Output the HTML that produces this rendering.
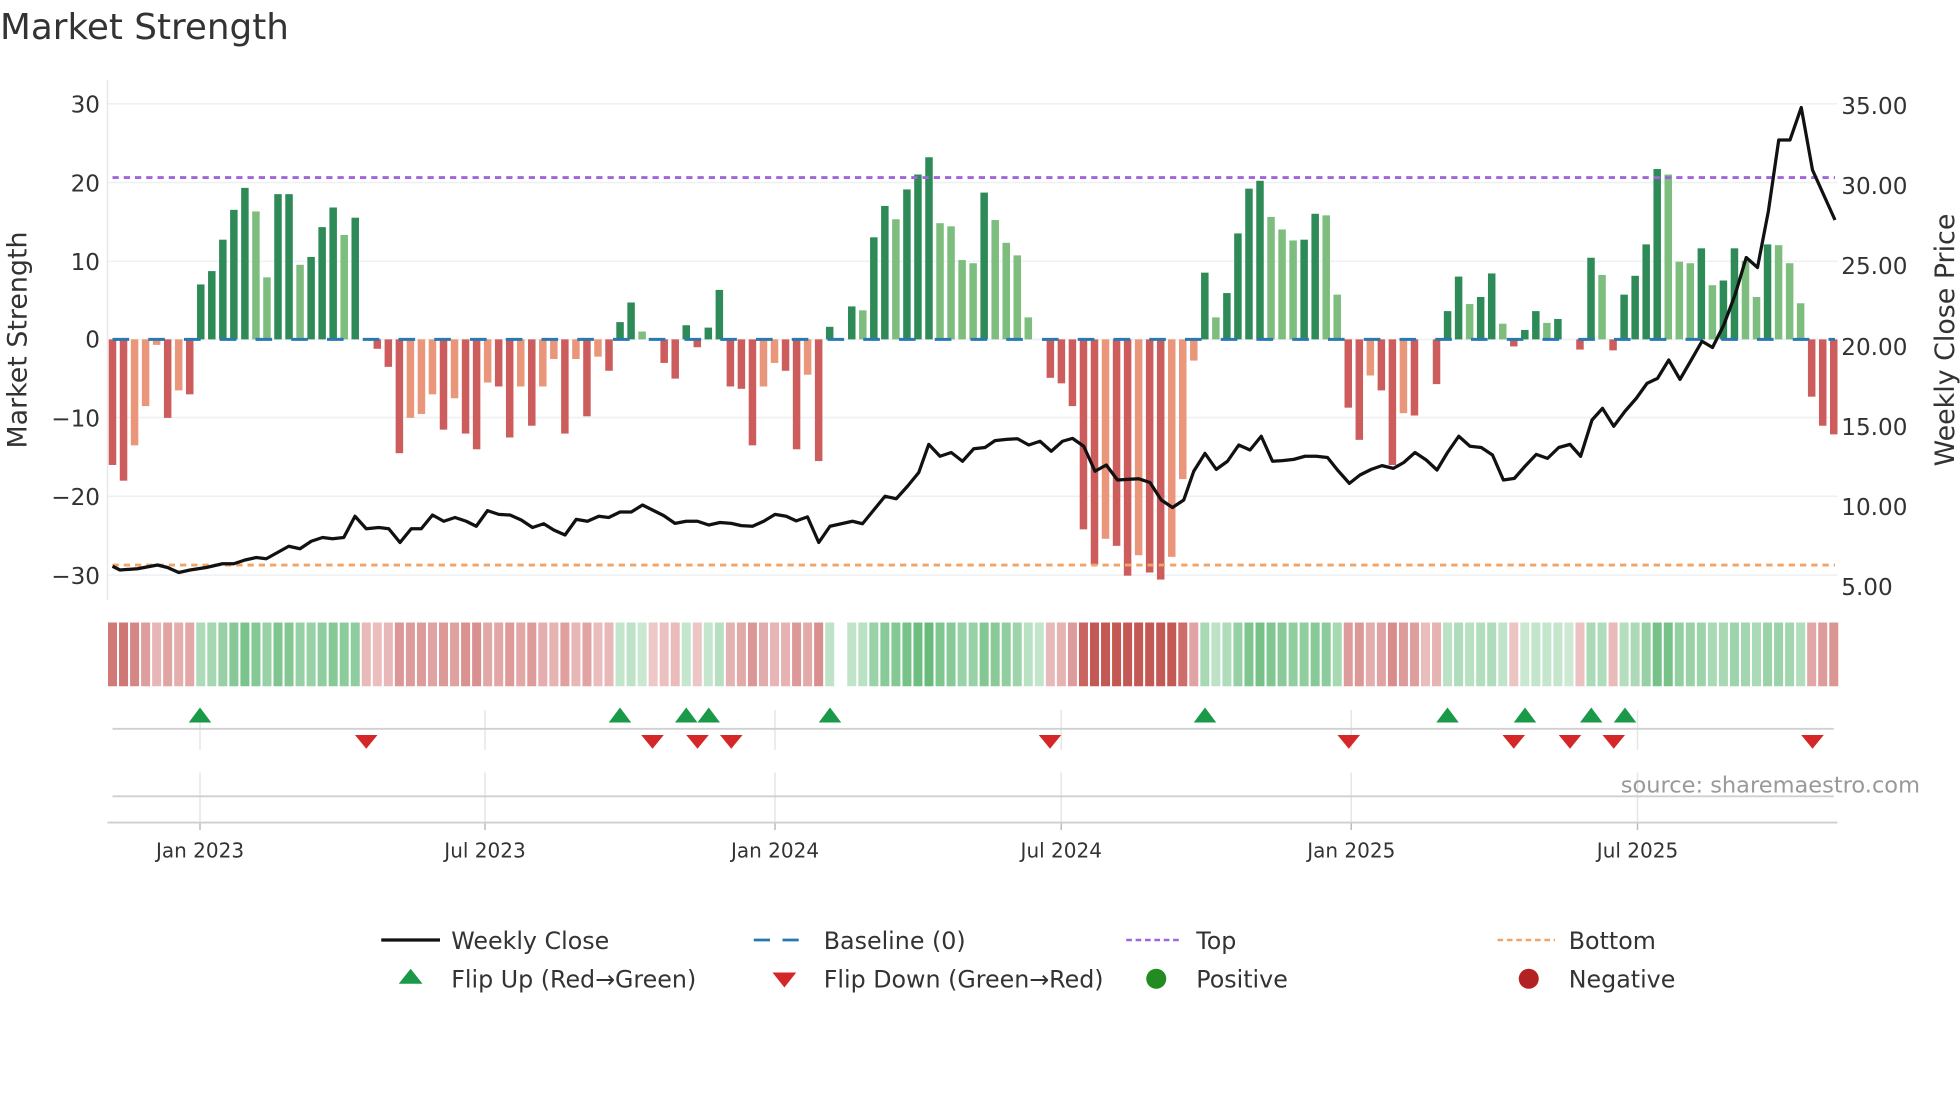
<!DOCTYPE html>
<html><head><meta charset="utf-8">
<style>
html,body{margin:0;padding:0;background:#fff;}
svg{display:block;}
text{font-family:"DejaVu Sans","Liberation Sans",sans-serif;fill:#333;}
</style></head>
<body>
<svg id="s" xmlns="http://www.w3.org/2000/svg" width="1960" height="1102" viewBox="0 0 1568 881.6">
<rect width="1568" height="882" fill="#fff"/>
<text x="0" y="31" font-size="28.6">Market Strength</text>
<g id="grid"></g>
<line x1="86" y1="64" x2="86" y2="480" stroke="#e6e8ec" stroke-width="1.2"/>
<g id="bars"></g>
<line x1="90" y1="142" x2="1468" y2="142" stroke="#a064dc" stroke-width="2.3" stroke-dasharray="5 4"/>
<line x1="90" y1="452" x2="1468" y2="452" stroke="#f2a366" stroke-width="2.3" stroke-dasharray="5 4"/>
<line x1="90" y1="271.5" x2="1468" y2="271.5" stroke="#2a78b0" stroke-width="2.4" stroke-dasharray="13.3 15.3"/>
<polyline id="price" fill="none" stroke="#111" stroke-width="2.6" stroke-linejoin="round"/>
<g font-size="18.5" text-anchor="end">
<text x="80" y="90">30</text><text x="80" y="153">20</text><text x="80" y="216">10</text>
<text x="80" y="278">0</text><text x="80" y="341">−10</text><text x="80" y="404">−20</text><text x="80" y="467">−30</text>
</g>
<g font-size="18.5">
<text x="1473" y="91">35.00</text><text x="1473" y="155">30.00</text><text x="1473" y="219">25.00</text>
<text x="1473" y="284">20.00</text><text x="1473" y="348">15.00</text><text x="1473" y="412">10.00</text><text x="1473" y="476">5.00</text>
</g>
<text transform="translate(21,272) rotate(-90)" text-anchor="middle" font-size="21.5">Market Strength</text>
<text transform="translate(1563,272) rotate(-90)" text-anchor="middle" font-size="21.5">Weekly Close Price</text>
<g id="heat"></g>
<g id="vgrid"></g>
<line x1="90" y1="583" x2="1467" y2="583" stroke="#d0d0d0" stroke-width="1.5"/>
<line x1="90" y1="637" x2="1467" y2="637" stroke="#d0d0d0" stroke-width="1.5"/>
<line x1="86" y1="658" x2="1470" y2="658" stroke="#cfcfcf" stroke-width="1.5"/>
<g id="marks"></g>
<text x="1536" y="634" font-size="18" text-anchor="end" style="fill:#999">source: sharemaestro.com</text>
<g font-size="16" text-anchor="middle">
<text x="160" y="686">Jan 2023</text><text x="388" y="686">Jul 2023</text><text x="620" y="686">Jan 2024</text>
<text x="849" y="686">Jul 2024</text><text x="1081" y="686">Jan 2025</text><text x="1310" y="686">Jul 2025</text>
</g>
<g font-size="19">
<line x1="305" y1="752" x2="352" y2="752" stroke="#111" stroke-width="2.6"/>
<text x="361" y="759">Weekly Close</text>
<line x1="603" y1="752" x2="648" y2="752" stroke="#2a78b0" stroke-width="2.2" stroke-dasharray="13 10"/>
<text x="659" y="759">Baseline (0)</text>
<line x1="901" y1="752" x2="946" y2="752" stroke="#a064dc" stroke-width="2" stroke-dasharray="4.5 3"/>
<text x="957" y="759">Top</text>
<line x1="1198" y1="752" x2="1244" y2="752" stroke="#f2a366" stroke-width="2" stroke-dasharray="4.5 3"/>
<text x="1255" y="759">Bottom</text>
<polygon points="319,787 338,787 328.5,775" fill="#1a9a48"/>
<text x="361" y="790">Flip Up (Red→Green)</text>
<polygon points="618,778 637,778 627.5,790" fill="#d62728"/>
<text x="659" y="790">Flip Down (Green→Red)</text>
<circle cx="925" cy="783" r="8" fill="#228b22"/>
<text x="957" y="790">Positive</text>
<circle cx="1223" cy="783" r="8" fill="#b22222"/>
<text x="1255" y="790">Negative</text>
</g>
</svg>
<script>
var NS="http://www.w3.org/2000/svg";
function el(p,t,a){var e=document.createElementNS(NS,t);for(var k in a)e.setAttribute(k,a[k]);document.getElementById(p).appendChild(e);return e;}
[83,146,209,271.5,334,397,460].forEach(function(y){el("grid","line",{x1:86,x2:1470,y1:y,y2:y,stroke:"#eef0f4","stroke-width":1.3});});
var d=[[-16,2],[-18,2],[-13.5,3],[-8.5,3],[-0.7,3],[-10,2],[-6.5,3],[-7,2],[7,0],[8.7,0],[12.7,0],[16.5,0],[19.3,0],[16.3,1],[7.9,1],[18.5,0],[18.5,0],[9.5,1],[10.5,0],[14.3,0],[16.8,0],[13.3,1],[15.5,0],[-0.3,0],[-1.2,2],[-3.5,2],[-14.5,2],[-10,3],[-9.5,3],[-7,3],[-11.5,2],[-7.5,3],[-12,2],[-14,2],[-5.5,3],[-6,2],[-12.5,2],[-6,3],[-11,2],[-6,3],[-2.5,3],[-12,2],[-2.5,3],[-9.8,2],[-2.2,3],[-4,2],[2.2,0],[4.7,0],[1,1],[-0.3,0],[-3,2],[-5,2],[1.8,0],[-1,2],[1.5,0],[6.3,0],[-6,2],[-6.3,2],[-13.5,2],[-6,3],[-3,3],[-4,2],[-14,2],[-4.5,3],[-15.5,2],[1.6,0],[0,0],[4.2,0],[3.7,1],[13,0],[17,0],[15.3,1],[19.1,0],[21,0],[23.2,0],[14.8,1],[14.4,1],[10.1,1],[9.7,1],[18.7,0],[15.2,1],[12.3,1],[10.7,1],[2.8,1],[0.3,1],[-4.9,2],[-5.6,2],[-8.5,2],[-24.2,2],[-28.7,2],[-25.4,3],[-26.3,2],[-30.1,2],[-27.5,3],[-29.7,2],[-30.6,2],[-27.7,3],[-17.8,3],[-2.7,3],[8.5,0],[2.8,1],[5.9,0],[13.5,0],[19.2,0],[20.2,0],[15.6,1],[14,1],[12.6,1],[12.7,0],[16,0],[15.8,1],[5.7,1],[-8.7,2],[-12.8,2],[-4.6,3],[-6.5,2],[-16,2],[-9.4,3],[-9.7,2],[-0.3,0],[-5.7,2],[3.6,0],[8,0],[4.5,1],[5.4,0],[8.4,0],[2,1],[-0.9,2],[1.2,0],[3.6,0],[2.1,1],[2.6,0],[0.3,0],[-1.3,2],[10.4,0],[8.2,1],[-1.4,2],[5.7,0],[8.1,0],[12.1,0],[21.7,0],[21,1],[9.9,1],[9.7,1],[11.6,0],[6.9,1],[7.5,0],[11.6,0],[10,1],[5.4,1],[12.1,0],[12,1],[9.7,1],[4.6,1],[-7.3,2],[-11,2],[-12.1,2]];
var cols=["#2e8b57","#7dbd7d","#cd5c5c","#e9967a"];
var step=1377/156, z=271.5, u=6.28;
d.forEach(function(b,i){
  var x=90+i*step, v=b[0];
  if(Math.abs(v)>=0.35){var h=Math.abs(v)*u; el("bars","rect",{x:x-3,y:v>0?z-h:z,width:6,height:h,fill:cols[b[1]]});}
  var s=0,n=0;for(var j=Math.max(0,i-2);j<=Math.min(d.length-1,i+1);j++){s+=Math.abs(d[j][0]);n++;}
  var m=0.5*Math.abs(v)+0.5*s/n, a=Math.min(1,0.12+m/26);
  var c;
  if(v===0) c="#ffffff";
  else if(v>0){c="rgb("+Math.round(222-(222-98)*a)+","+Math.round(242-(242-184)*a)+","+Math.round(228-(228-118)*a)+")";}
  else {c="rgb("+Math.round(246-(246-196)*a)+","+Math.round(222-(222-88)*a)+","+Math.round(224-(224-84)*a)+")";}
  el("heat","rect",{x:x-3.6,y:498,width:7.2,height:51,fill:c});
});
[160,388,620,849,1081,1310].forEach(function(x){
  el("vgrid","line",{x1:x,x2:x,y1:568,y2:600,stroke:"#e6e6e6","stroke-width":1.2});
  el("vgrid","line",{x1:x,x2:x,y1:618,y2:658,stroke:"#e6e6e6","stroke-width":1.2});
  el("vgrid","line",{x1:x,x2:x,y1:658,y2:664,stroke:"#bbb","stroke-width":1.2});
});
[160,496,549,567,664,964,1158,1220,1273,1300].forEach(function(x){
  el("marks","polygon",{points:(x-9)+",578 "+(x+9)+",578 "+x+",566",fill:"#1a9a48"});});
[293,522,558,585,840,1079,1211,1256,1291,1450].forEach(function(x){
  el("marks","polygon",{points:(x-9)+",588 "+(x+9)+",588 "+x+",599",fill:"#d62728"});});
var p=[[90,453],[96,456],[110,455],[126,452],[134,454],[143,458],[152,456],[165,454],[178,451],[187,451],[196,448],[205,446],[213,447],[222,442],[231,437],[240,439],[249,433],[258,430],[266,431],[275,430],[284,413],[293,423],[303,422],[311,423],[320,434],[329,423],[337,423],[346,412],[355,417],[364,414],[373,417],[381,421],[390,408.5],[399,411.5],[408,412],[417,416],[426,422],[435,419],[443,424],[452,428],[461,415.5],[470,417],[479,413],[487,414],[496,409.6],[505,409.6],[514,404],[523,408.5],[531,412.5],[540,418.7],[549,417],[558,417],[567,420],[576,418],[585,418.7],[593,420.5],[602,421],[611,417],[620,411.5],[629,413],[637,416.7],[646,413.5],[655,434],[664,421],[673,419],[682,417],[690,419],[699,408],[708,397],[717,399],[726,389],[735,378],[743,355.5],[752,365],[761,362],[770,369],[779,359],[788,358],[796,352.5],[805,351.5],[814,351],[823,356],[832,353],[841,361],[850,353],[858,350.7],[867,357],[876,377],[885,372],[894,384],[902,383.5],[911,383],[920,386],[929,400],[938,406],[947,400],[955,377],[964,362.7],[973,375.5],[982,369],[991,356],[1000,360],[1009,349],[1018,369],[1026,368.5],[1035,367.5],[1044,365],[1053,365],[1062,366],[1070,376],[1079.5,386.7],[1088,380],[1097,375.5],[1105.6,372.5],[1114.7,374.7],[1123,370],[1132,362],[1141,368],[1149.6,376],[1158,362],[1167,349],[1176,357],[1185,358],[1194,364],[1202.7,384],[1211.5,382.7],[1220,373],[1229,363.5],[1238,366.7],[1247,358],[1256,355.5],[1264.5,365],[1273.6,336],[1282,326.7],[1291,341],[1300,329],[1309,318.7],[1317.6,306.7],[1326,302.7],[1335,288],[1344,303.5],[1353,288],[1361.6,273],[1370,278],[1379,260],[1388,236],[1397,206],[1406,214],[1414.7,169],[1423,112],[1432,112],[1441,86],[1450,136],[1468,176]];
document.getElementById("price").setAttribute("points",p.map(function(q){return q[0]+","+q[1];}).join(" "));
</script>
</body></html>
